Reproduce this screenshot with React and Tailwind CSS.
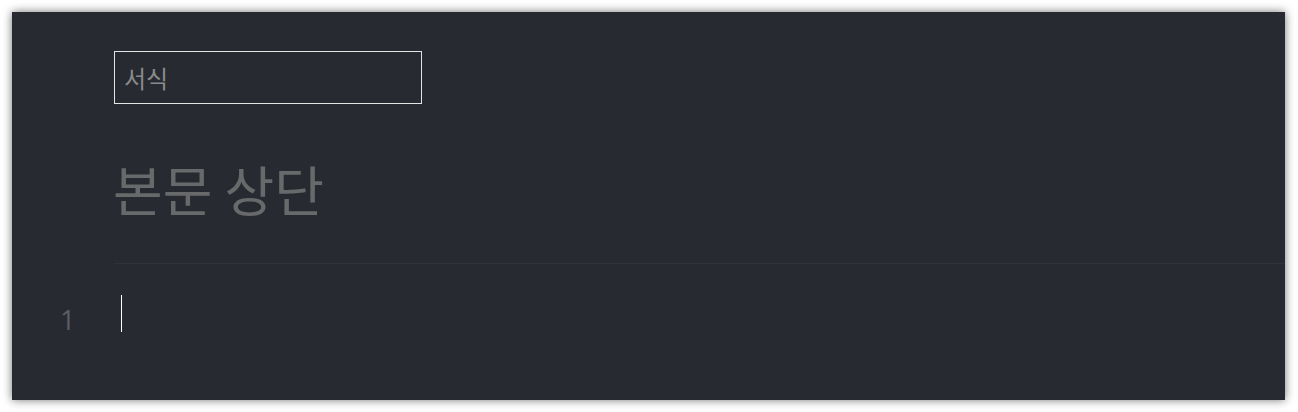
export default function App() {
  return (
    <div className="w-[1298px] h-[412px] bg-white p-3" style={{ fontFamily: '"Noto Sans CJK KR", "Noto Sans", sans-serif' }}>
      <div className="w-[1273px] h-[388px] bg-[#272a31] shadow-[0_0_9px_rgba(0,0,0,0.55)] flex flex-col">
        <div className="pl-[102px] pt-[39px]">
          <div className="w-[308px] h-[53px] border border-[#e4e4e4] flex items-center pl-[9px] text-[24px] text-[#8a8a8a]">
            서식
          </div>
        </div>
        <div className="pl-[101px] mt-[50px] h-[70px] flex items-center text-[54px] leading-none text-[#68696b]">
          본문 상단
        </div>
        <div className="ml-[102px] mt-[39px] h-px bg-[#30333b]"></div>
        <div className="flex mt-[31px]">
          <div className="w-[102px] h-[37px] flex items-center pl-[48px] text-[27px] text-[#5c5e63] pt-[13px]" style={{ fontFamily: '"Open Sans", sans-serif' }}>
            1
          </div>
          <div className="ml-[7px] w-px h-[37px] bg-white"></div>
        </div>
      </div>
    </div>
  );
}
